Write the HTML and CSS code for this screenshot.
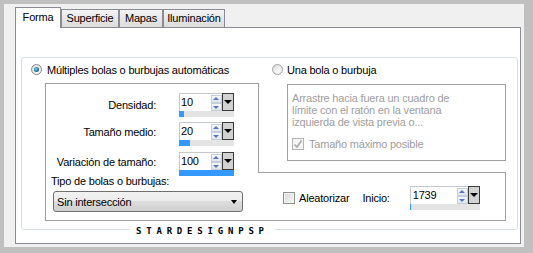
FILE: index.html
```html
<!DOCTYPE html>
<html lang="es">
<head>
    <meta charset="UTF-8">
    <title>Forma</title>
    <link rel="stylesheet" href="styles.css">
</head>
<body>

    <div class="window">

        <div class="tabs">
            <div class="tab active tab-forma">Forma</div>
            <div class="tab tab-superficie">Superficie</div>
            <div class="tab tab-mapas">Mapas</div>
            <div class="tab tab-iluminacion">Iluminación</div>
        </div>

        <div class="panel">
            <div class="group">

                <div class="radio-row radio-left">
                    <span class="radio checked"></span>
                    <span class="radio-label">Múltiples bolas o burbujas automáticas</span>
                </div>

                <div class="radio-row radio-right">
                    <span class="radio"></span>
                    <span class="radio-label">Una bola o burbuja</span>
                </div>

                <div class="auto-box">
                    <div class="spin-row row-densidad">
                        <div class="spin-label">Densidad:</div>
                        <div class="spin">
                            <div class="spin-top">
                                <div class="spin-value">10</div>
                                <div class="spin-arrows"><span class="arrow-up"></span><span class="arrow-down"></span></div>
                                <div class="spin-drop"></div>
                            </div>
                            <div class="spin-bar"><div class="bar-fill" style="width: 5px"></div></div>
                        </div>
                    </div>
                    <div class="spin-row row-medio">
                        <div class="spin-label">Tamaño medio:</div>
                        <div class="spin">
                            <div class="spin-top">
                                <div class="spin-value">20</div>
                                <div class="spin-arrows"><span class="arrow-up"></span><span class="arrow-down"></span></div>
                                <div class="spin-drop"></div>
                            </div>
                            <div class="spin-bar"><div class="bar-fill" style="width: 11px"></div></div>
                        </div>
                    </div>
                    <div class="spin-row row-variacion">
                        <div class="spin-label">Variación de tamaño:</div>
                        <div class="spin">
                            <div class="spin-top">
                                <div class="spin-value">100</div>
                                <div class="spin-arrows"><span class="arrow-up"></span><span class="arrow-down"></span></div>
                                <div class="spin-drop"></div>
                            </div>
                            <div class="spin-bar"><div class="bar-fill" style="width: 100%"></div></div>
                        </div>
                    </div>

                    <div class="type-label">Tipo de bolas o burbujas:</div>
                    <div class="select">
                        <span>Sin intersección</span>
                        <span class="select-arrow"></span>
                    </div>
                </div>

                <div class="single-box">
                    <div class="hint">Arrastre hacia fuera un cuadro de<br>límite con el ratón en la ventana<br>izquierda de vista previa o...</div>
                    <div class="check-row">
                        <span class="checkbox disabled">
                            <svg width="10" height="10" viewBox="0 0 10 10"><path d="M1.5 5.5 L4 8 L8.5 1.5" fill="none" stroke="#a8a8a8" stroke-width="1.6"/></svg>
                        </span>
                        <span class="check-label">Tamaño máximo posible</span>
                    </div>
                </div>

                <div class="seed-box">
                    <span class="checkbox"></span>
                    <span class="seed-random">Aleatorizar</span>
                    <span class="seed-label">Inicio:</span>
                    <div class="spin spin-wide">
                        <div class="spin-top">
                            <div class="spin-value">1739</div>
                            <div class="spin-arrows"><span class="arrow-up"></span><span class="arrow-down"></span></div>
                            <div class="spin-drop"></div>
                        </div>
                        <div class="spin-bar"><div class="bar-fill" style="width: 1px"></div></div>
                    </div>
                </div>

            </div>

            <div class="watermark">STARDESIGNPSP</div>
        </div>

    </div>

</body>
</html>
```

FILE: styles.css
```css
body {
    margin: 0;
    width: 533px;
    height: 253px;
    background-color: #c0c0c0;
    font-family: "Liberation Sans", Arial, sans-serif;
    font-size: 11px;
    letter-spacing: -0.2px;
    color: #000;
    overflow: hidden;
}

.window {
    margin: 4px 0 0 4px;
    width: 520px;
    height: 243px;
    padding: 3px 0 0 11px;
    box-sizing: border-box;
    background-color: #f0f0f0;
}

/* tabs */

.tabs {
    display: flex;
    align-items: flex-end;
    height: 20px;
}

.tab {
    height: 18px;
    box-sizing: border-box;
    border: 1px solid #898c95;
    border-bottom: none;
    text-align: center;
    line-height: 17px;
    background: linear-gradient(#f4f4f4, #e8e8e8 45%, #dcdcdc);
}

.tab.active {
    height: 21px;
    margin-bottom: -1px;
    line-height: 18px;
    background: #ffffff;
    position: relative;
    z-index: 1;
}

.tab-forma { width: 46px; }
.tab-superficie { width: 58px; }
.tab-mapas { width: 44px; }
.tab-iluminacion { width: 62px; }

/* panel */

.panel {
    position: relative;
    width: 506px;
    height: 217px;
    box-sizing: border-box;
    border: 1px solid #898c95;
    background-color: #ffffff;
    padding: 29px 0 0 5px;
}

.group {
    width: 497px;
    height: 173px;
    box-sizing: border-box;
    border: 1px solid #d5dfe5;
    border-radius: 3px;
    display: grid;
    grid-template-columns: 237px 258px;
    grid-template-rows: 25px 89px 49px;
}

.radio-row {
    display: flex;
    align-items: center;
    padding-bottom: 2px;
}

.radio-left { padding-left: 9px; }
.radio-right { padding-left: 13px; }

.radio {
    width: 11px;
    height: 11px;
    box-sizing: border-box;
    border-radius: 50%;
    border: 1px solid #a5a5a5;
    background: radial-gradient(circle at 60% 65%, #ffffff, #e2e2e2 70%, #d0d0d0);
    position: relative;
}

.radio.checked {
    border-color: #8b8b8b;
}

.radio.checked::after {
    content: "";
    position: absolute;
    left: 2px;
    top: 2px;
    width: 5px;
    height: 5px;
    border-radius: 50%;
    background: radial-gradient(circle at 40% 40%, #7fd0f2, #1a6f9e 60%, #0b3f62);
}

.radio-left .radio-label { margin-left: 5px; }
.radio-right .radio-label { margin-left: 4px; }

/* automatic bubbles */

.auto-box {
    grid-row: 2 / 4;
    grid-column: 1;
    margin-left: 23px;
    width: 214px;
    box-sizing: border-box;
    border: 1px solid #a0a0a0;
}

.spin-row {
    display: flex;
    height: 24px;
}

.row-densidad { margin-top: 9px; }
.row-medio { margin-top: 5px; }
.row-variacion { margin-top: 6px; }

.spin-label {
    width: 110px;
    text-align: right;
    line-height: 13px;
    padding-top: 4px;
    margin-right: 23px;
}

.row-densidad .spin-label { padding-top: 6px; }

.spin {
    width: 55px;
    height: 24px;
    box-sizing: border-box;
    border: 1px solid #c5c8cc;
    background-color: #ffffff;
    display: flex;
    flex-direction: column;
}

.spin-top {
    display: flex;
    height: 17px;
}

.spin-value {
    flex: 1;
    padding-left: 1px;
    line-height: 16px;
}

.spin-arrows {
    width: 11px;
    display: flex;
    flex-direction: column;
    padding-top: 1px;
}

.arrow-up,
.arrow-down {
    flex: 1;
    border: 1px solid #c4cfdd;
    background: linear-gradient(#f6f8fb, #dfe6f0);
    position: relative;
}

.arrow-up::after,
.arrow-down::after {
    content: "";
    position: absolute;
    left: 1px;
    border-left: 3.5px solid transparent;
    border-right: 3.5px solid transparent;
}

.arrow-up::after {
    top: 1px;
    border-bottom: 3px solid #5676b8;
}

.arrow-down::after {
    top: 2px;
    border-top: 3px solid #5676b8;
}

.spin-drop {
    width: 12px;
    margin-top: -1px;
    margin-right: -1px;
    box-sizing: border-box;
    border: 1px solid #3a3a3a;
    background-color: #d2d2d2;
    position: relative;
}

.spin-drop::after {
    content: "";
    position: absolute;
    left: 1px;
    top: 6px;
    border-left: 4px solid transparent;
    border-right: 4px solid transparent;
    border-top: 4px solid #000;
}

.spin-bar {
    flex: 1;
    background-color: #e4e4e4;
    margin: 0 -1px -1px -1px;
}

.bar-fill {
    height: 100%;
    background-color: #3399ff;
}

.type-label {
    margin-top: -1px;
    padding-left: 5px;
    line-height: 13px;
}

.select {
    margin: 3px 0 0 7px;
    width: 190px;
    height: 21px;
    box-sizing: border-box;
    border: 1px solid #707070;
    border-radius: 3px;
    background: linear-gradient(#f2f2f2, #ebebeb 50%, #dddddd 50%, #cfcfcf);
    display: flex;
    align-items: center;
    justify-content: space-between;
    padding: 0 3px 0 3px;
}

.select-arrow {
    border-left: 3.5px solid transparent;
    border-right: 3.5px solid transparent;
    border-top: 4px solid #000;
    margin-right: 2px;
}

/* single bubble */

.single-box {
    grid-row: 2;
    grid-column: 2;
    margin: 1px 0 0 28px;
    width: 219px;
    height: 77px;
    box-sizing: border-box;
    border: 1px solid #a0a0a0;
    padding: 7px 0 0 4px;
    color: #a0a0a0;
}

.hint {
    line-height: 12px;
}

.check-row {
    display: flex;
    align-items: center;
    margin-top: 9px;
    height: 13px;
}

.checkbox {
    width: 12px;
    height: 12px;
    box-sizing: border-box;
    border: 1px solid #8e8f8f;
    background: linear-gradient(135deg, #d6d6d6, #f8f8f8);
    box-shadow: inset 0 0 0 1px #f3f3f3;
    display: flex;
    align-items: center;
    justify-content: center;
}

.checkbox.disabled {
    border-color: #b4b4b4;
    background: #f4f4f4;
}

.check-label {
    margin-left: 5px;
}

/* random seed */

.seed-box {
    grid-row: 3;
    grid-column: 2;
    margin-left: -1px;
    width: 248px;
    box-sizing: border-box;
    border: 1px solid #a0a0a0;
    border-left: none;
    background-color: #ffffff;
    z-index: 1;
    display: flex;
    align-items: center;
    padding: 3px 0 0 25px;
}

.seed-random {
    margin-left: 4px;
}

.seed-label {
    margin-left: 13px;
    margin-right: 20px;
}

.spin-wide {
    width: 70px;
}

.spin-wide .spin-value {
    padding-left: 2px;
}

.watermark {
    position: absolute;
    left: 114px;
    top: 198px;
    padding: 1px 6px;
    background-color: #ffffff;
    font-family: "DejaVu Sans Mono", monospace;
    font-weight: bold;
    font-size: 9px;
    line-height: 9px;
    letter-spacing: 4.8px;
}
```
